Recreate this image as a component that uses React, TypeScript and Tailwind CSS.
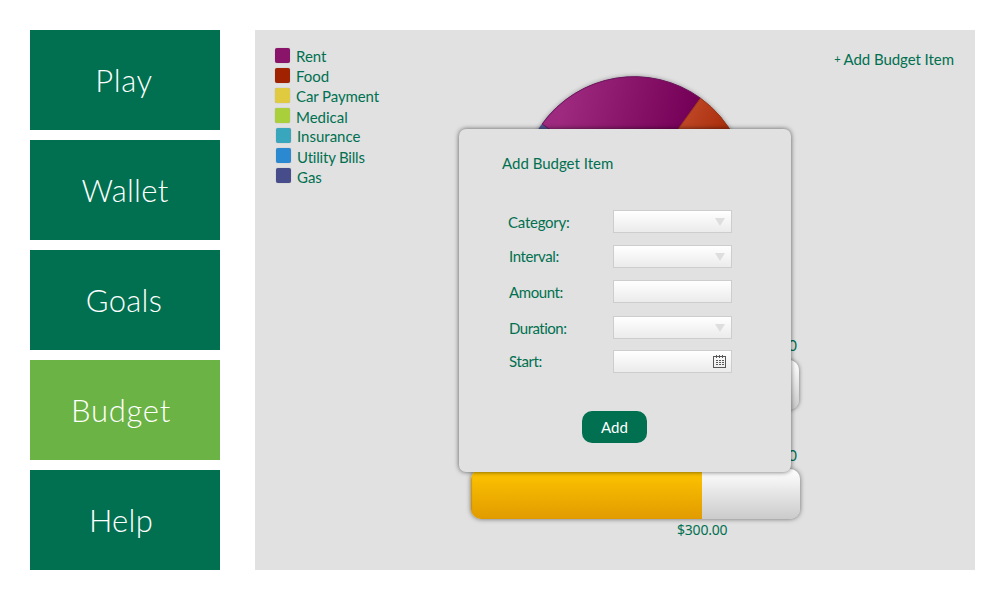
const nav = [
  { label: "Play", cls: "bg-[#007050] tracking-[0.6px] pr-0.5" },
  { label: "Wallet", cls: "bg-[#007050] tracking-[0.3px] pr-0" },
  { label: "Goals", cls: "bg-[#007050] tracking-[0.3px] pr-0.5" },
  { label: "Budget", cls: "bg-[#6bb344] tracking-[0.7px] pr-2" },
  { label: "Help", cls: "bg-[#007050] tracking-[0.3px] pr-2" },
];

const legend = [
  { label: "Rent", swatch: "bg-[#8b146b]", row: "", text: "" },
  { label: "Food", swatch: "bg-[#a12200]", row: "", text: "" },
  { label: "Car Payment", swatch: "bg-[#dfca40]", row: "", text: "tracking-[-0.1px]" },
  { label: "Medical", swatch: "bg-[#a9cf3b]", row: "", text: "pt-0.5" },
  { label: "Insurance", swatch: "bg-[#38a7be]", row: "pl-px", text: "" },
  { label: "Utility Bills", swatch: "bg-[#2a89d0]", row: "pl-px", text: "pt-[3px] tracking-[-0.2px]" },
  { label: "Gas", swatch: "bg-[#474d8a]", row: "pl-px", text: "pt-0.5" },
];

const fields = [
  { label: "Category:", kind: "select", row: "mb-3", text: "-ml-px pt-0.5 tracking-[-0.25px]" },
  { label: "Interval:", kind: "select", row: "mb-3", text: "pt-px tracking-[-0.4px]" },
  { label: "Amount:", kind: "text", row: "mb-[13px]", text: "pt-0.5 tracking-[-0.4px]" },
  { label: "Duration:", kind: "select", row: "mb-[11px]", text: "pt-0.5 tracking-[-0.5px]" },
  { label: "Start:", kind: "date", row: "", text: "pt-px tracking-[-0.4px]" },
];

function Calendar() {
  return (
    <svg width="13" height="13" viewBox="0 0 13 13" className="mr-[5px] text-[#585858]" shapeRendering="crispEdges">
      <path d="M.5 1.5h12v11H.5z" fill="none" stroke="currentColor" />
      <path d="M3.5 0v3M6.5 0v3M9.5 0v3" stroke="currentColor" />
      <path d="M3 5.5h8M3 7.5h8M3 9.5h8" stroke="currentColor" strokeDasharray="2 1" />
    </svg>
  );
}

function Pie() {
  return (
    <svg width="240" height="240" viewBox="-120 -120 240 240" className="drop-shadow-[0_0_2px_#00000055]">
      <defs>
        <linearGradient id="rent" gradientUnits="userSpaceOnUse" x1="-70" y1="-90" x2="53" y2="-58">
          <stop stopColor="#9d2a7e" />
          <stop offset="1" stopColor="#750057" />
        </linearGradient>
        <linearGradient id="food" gradientUnits="userSpaceOnUse" x1="55" y1="-75" x2="91" y2="-58">
          <stop stopColor="#bd4524" />
          <stop offset="1" stopColor="#a82d0b" />
        </linearGradient>
      </defs>
      <circle r="113.5" fill="#515591" />
      <path d="M0 0L-91.8 -66A113 113 0 0 1 66.5 -91.8Z" fill="url(#rent)" stroke="#70135c" strokeWidth="1" />
      <path d="M0 0L66.5 -91.8A113.3 113.3 0 0 1 113.3 0Z" fill="url(#food)" stroke="#9c3518" strokeWidth="1" />
    </svg>
  );
}

export default function App() {
  return (
    <div className="flex h-[600px] w-[1000px] gap-[35px] bg-white p-[30px] pr-[25px] font-['Lato',sans-serif] text-[#007050] [font-variant-ligatures:none]">
      <nav className="flex w-[190px] flex-col gap-2.5">
        {nav.map((n) => (
          <a key={n.label} className={`flex h-[100px] items-center justify-center pt-px text-[31px] leading-none font-light text-white ${n.cls}`}>
            {n.label}
          </a>
        ))}
      </nav>

      <main className="relative flex w-[720px] flex-col overflow-hidden bg-[#e1e1e1] text-[15px] leading-5">
        <div className="flex h-[540px] justify-between pl-[19.5px]">
          <ul className="pt-[15.5px]">
            {legend.map((l) => (
              <li key={l.label} className={`flex h-5 items-center gap-[6.5px] ${l.row}`}>
                <span className={`h-[15px] w-[15px] rounded-[2px] shadow-[0_0_1px_#00000055] ${l.swatch}`} />
                <span className={`whitespace-nowrap ${l.text}`}>{l.label}</span>
              </li>
            ))}
          </ul>
          <a className="mt-[19px] mr-[21px] flex h-5 gap-[3px] whitespace-nowrap tracking-[-0.05px]">
            <span className="text-[11px]">+</span>
            <span>Add Budget Item</span>
          </a>
        </div>

        <div className="absolute top-[40px] left-[259px]">
          <Pie />
        </div>

        <section className="absolute top-[305px] left-[215px] w-[330px]">
          <div className="h-5 pr-[3px] text-right">0</div>
          <div className="mt-[5px] mr-px h-[50px] rounded-[10px] bg-linear-to-b from-white to-[#cbcbcb] shadow-[0_0_4px_#00000088]" />
          <div className="mt-[35px] h-5 pr-[3px] text-right">0</div>
          <div className="mt-[4px] ml-px flex h-[50px] overflow-hidden rounded-[10px] bg-linear-to-b from-white to-[#cbcbcb] shadow-[0_0_5px_#00000088]">
            <div className="w-[231px] bg-linear-to-b from-[#ffc600] to-[#e19b00] shadow-[inset_1px_0_1px_#b87b0088]" />
          </div>
          <div className="mt-px ml-[207px] font-['Noto_Sans',sans-serif] text-[14px] tracking-[-0.2px]">$300.00</div>
        </section>

        <form className="absolute top-[99px] left-[204px] flex h-[343px] w-[332px] flex-col rounded-[7px] bg-[#e1e1e1] shadow-[0_0_5px_#00000099]">
          <h2 className="mt-6 ml-[43px] h-5">Add Budget Item</h2>
          <div className="mt-[37px] ml-[50px]">
            {fields.map((f) => (
              <label key={f.label} className={`flex h-[23px] ${f.row}`}>
                <span className="w-[104px]">
                  <span className={`block whitespace-nowrap ${f.text}`}>{f.label}</span>
                </span>
                <span className="flex h-[23px] w-[119px] items-center justify-end border border-[#cdcdcd] bg-linear-to-b from-white to-[#ebebeb]">
                  {f.kind === "select" && (
                    <svg width="10" height="8" viewBox="0 0 10 8" className="mr-1.5">
                      <path d="M0 0h10L5 8z" fill="#dedede" />
                    </svg>
                  )}
                  {f.kind === "date" && <Calendar />}
                </span>
              </label>
            ))}
          </div>
          <button type="button" className="mt-[38px] ml-[123px] h-8 w-[65px] rounded-[10px] bg-[#007050] pb-px text-white">
            Add
          </button>
        </form>
      </main>
    </div>
  );
}
